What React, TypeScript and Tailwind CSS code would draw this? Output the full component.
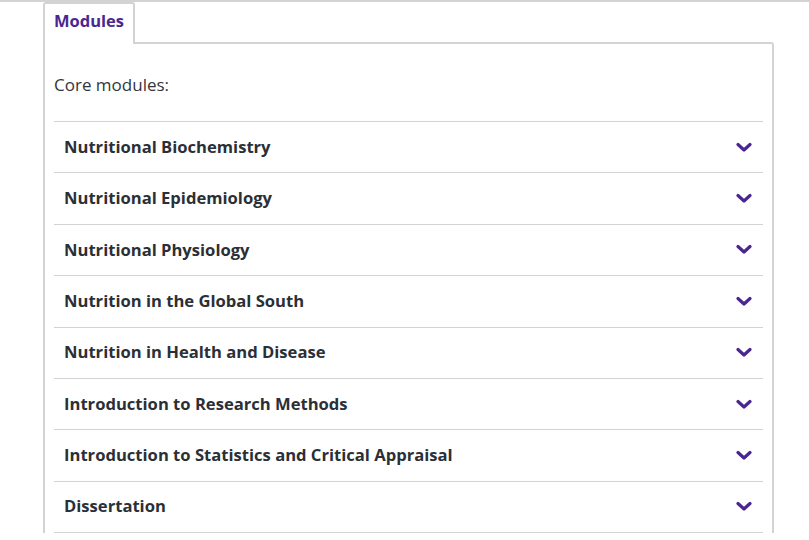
const modules = [
  "Nutritional Biochemistry",
  "Nutritional Epidemiology",
  "Nutritional Physiology",
  "Nutrition in the Global South",
  "Nutrition in Health and Disease",
  "Introduction to Research Methods",
  "Introduction to Statistics and Critical Appraisal",
  "Dissertation",
];

function Chevron() {
  return (
    <svg width="16" height="11" viewBox="0 0 16 11" className="text-[#4a2790]">
      <polyline points="2,2.5 8,8 14,2.5" fill="none" stroke="currentColor" strokeWidth="3.2" strokeLinecap="round" strokeLinejoin="round" />
    </svg>
  );
}

export default function App() {
  return (
    <div className="h-[540px] overflow-hidden bg-white font-['Open_Sans','Noto_Sans',sans-serif]">
      <div className="border-t-2 border-[#d3d3d3] pl-[43px] pr-[35px]">
        <div className="flex">
          <div className="relative -mb-[2px] h-[42px] w-[92px] rounded-t-[3px] border-2 border-b-0 border-[#d3d3d3] bg-white pl-[9px] pt-[5px]">
            <span className="text-[16.5px] leading-[24px] font-bold text-[#4a2790]">Modules</span>
          </div>
        </div>
        <div className="rounded-tr-[3px] border-2 border-b-0 border-[#d3d3d3] px-[9px] pt-[29px]">
          <p className="mb-[24px] text-[17px] leading-[24px] text-[#33363c]">Core modules:</p>
          <div className="border-t border-[#d3d3d3]">
            {modules.map((m) => (
              <div key={m} className="flex h-[51.4px] items-center justify-between border-b border-[#d3d3d3] pl-[10px] pr-[11px]">
                <span className="text-[16.6px] font-bold text-[#2b2f36]">{m}</span>
                <Chevron />
              </div>
            ))}
          </div>
        </div>
      </div>
    </div>
  );
}
